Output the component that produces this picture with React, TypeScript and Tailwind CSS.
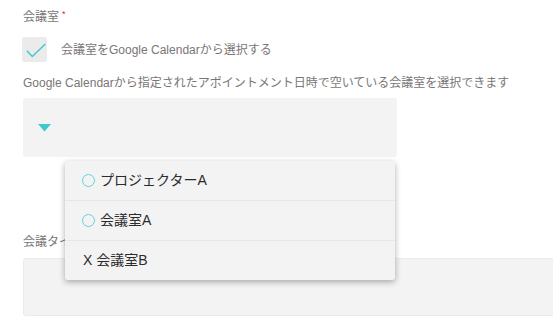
import React from "react";

const font = { fontFamily: '"Liberation Sans", "Noto Sans CJK JP", sans-serif' };

export default function App() {
  return (
    <div className="w-[553px] h-[328px] overflow-hidden bg-white relative" style={font}>
      <div className="pl-[23px] pt-[9px]">
        <div className="flex items-start h-4 leading-4 text-[12px] text-[#7a7674]">
          <span>会議室</span>
          <span className="text-[#e0242b] text-[9px] leading-none ml-[3px] mt-[1px]">*</span>
        </div>

        <div className="mt-[12px] flex items-center h-[25px]">
          <div className="w-[25px] h-[25px] bg-[#ebebeb] rounded-[2px] -ml-px">
            <svg width="25" height="25" viewBox="0 0 25 25">
              <path d="M5.3 14.3 L10.3 19.6 L23 7.3" fill="none" stroke="#3cc8cc" strokeWidth="1.4" strokeLinecap="round" strokeLinejoin="round" />
            </svg>
          </div>
          <span className="ml-[14px] text-[12px] leading-4 text-[#7a7674]">会議室をGoogle Calendarから選択する</span>
        </div>

        <div className="mt-[13px] h-4 leading-4 text-[12px] text-[#7a7674] whitespace-nowrap">
          Google Calendarから指定されたアポイントメント日時で空いている会議室を選択できます
        </div>

        <div className="mt-[7px] w-[374px] h-[59px] bg-[#f3f3f3] rounded-[3px] flex items-center pl-[15px]">
          <svg width="13" height="8" viewBox="0 0 13 8">
            <path d="M0 0 H13 L6.5 7.5 Z" fill="#3ec9cc" />
          </svg>
        </div>

        <div className="mt-[77px] h-4 leading-4 text-[12px] text-[#7a7674]">会議タイトル</div>

        <div className="mt-[8px] w-[560px] h-[58px] bg-[#f3f3f3] border border-[#ebebeb] rounded-[3px]" />
      </div>

      <div className="absolute left-[65px] top-[161px] w-[330px] bg-[#f3f3f3] rounded-[3px] shadow-[0_2px_6px_rgba(0,0,0,0.32)] text-[14px] text-[#2b2b2b]">
        <div className="h-[40px] flex items-center pl-[17px] border-b border-[#e6e6e6]">
          <span className="w-[13px] h-[13px] rounded-full border border-[#5fd3d6] box-border" />
          <span className="ml-[5px]">プロジェクターA</span>
        </div>
        <div className="h-[40px] flex items-center pl-[17px] border-b border-[#e6e6e6]">
          <span className="w-[13px] h-[13px] rounded-full border border-[#5fd3d6] box-border" />
          <span className="ml-[5px]">会議室A</span>
        </div>
        <div className="h-[39px] flex items-center pl-[18px]">
          <span>X 会議室B</span>
        </div>
      </div>
    </div>
  );
}
